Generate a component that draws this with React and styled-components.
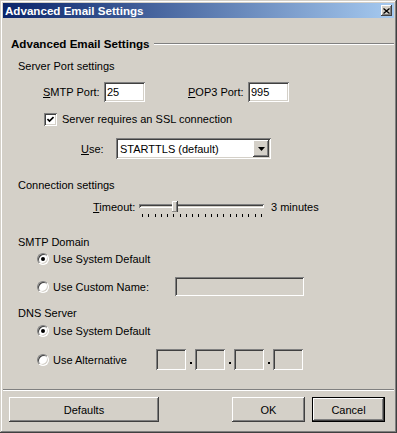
import React from 'react';
import styled, { createGlobalStyle } from 'styled-components';

const GlobalStyle = createGlobalStyle`
  html, body {
    margin: 0;
    padding: 0;
    background: #d4d0c8;
  }
  body {
    font-family: "Liberation Sans", Arial, sans-serif;
    font-size: 11px;
    color: #000;
  }
`;

const RAISED = 'inset -1px -1px #404040, inset 1px 1px #ffffff, inset -2px -2px #808080, inset 2px 2px #d4d0c8';
const SUNKEN = 'inset 1px 1px #808080, inset -1px -1px #ffffff, inset 2px 2px #404040, inset -2px -2px #d4d0c8';

const Window = styled.div`
  box-sizing: border-box;
  width: 397px;
  height: 433px;
  padding: 3px;
  background: #d4d0c8;
  box-shadow: inset -1px -1px #404040, inset 1px 1px #d4d0c8, inset -2px -2px #808080, inset 2px 2px #ffffff;
  display: flex;
  flex-direction: column;
`;

const TitleBar = styled.div`
  height: 15px;
  display: flex;
  align-items: center;
  padding-left: 2px;
  background: linear-gradient(to right, #0a246a, #a6caf0);
  color: #fff;
  font-weight: bold;
  font-size: 11.6px;
`;

const TitleText = styled.span`
  flex: 1;
`;

const CloseButton = styled.div`
  width: 11px;
  height: 11px;
  margin-right: 2px;
  background: #d4d0c8;
  box-shadow: inset -1px -1px #404040, inset 1px 1px #ffffff, inset -2px -2px #808080;
  display: flex;
  align-items: center;
  justify-content: center;
`;

const Row = styled.div`
  display: flex;
  align-items: ${p => (p.$top ? 'flex-start' : 'center')};
  height: ${p => p.$h || 14}px;
  margin-top: ${p => p.$mt || 0}px;
  padding-left: ${p => p.$indent || 0}px;
  line-height: 14px;
  white-space: nowrap;
`;

const GroupTitle = styled.span`
  font-weight: bold;
  font-size: 11.6px;
  padding-left: 8px;
`;

const GroupLine = styled.div`
  flex: 1;
  height: 0;
  margin-left: 4px;
  border-top: 1px solid #808080;
  border-bottom: 1px solid #ffffff;
`;

const Label = styled.span`
  display: inline-block;
  width: ${p => (p.$w ? `${p.$w}px` : 'auto')};
  margin-left: ${p => p.$ml || 0}px;
`;

const Key = styled.span`
  text-decoration: underline;
`;

const TextBox = styled.div`
  box-sizing: border-box;
  width: ${p => p.$w}px;
  height: ${p => p.$h || 20}px;
  padding: 0 3px;
  display: flex;
  align-items: center;
  background: ${p => (p.$disabled ? '#d4d0c8' : '#ffffff')};
  box-shadow: ${SUNKEN};
`;

const CheckBox = styled.div`
  box-sizing: border-box;
  width: 13px;
  height: 13px;
  margin-right: 5px;
  background: #fff;
  box-shadow: ${SUNKEN};
  display: flex;
  align-items: center;
  justify-content: center;
`;

const Radio = styled.div`
  box-sizing: border-box;
  width: 12px;
  height: 12px;
  margin-right: 4px;
  border-radius: 50%;
  border: 1px solid;
  border-color: #808080 #ffffff #ffffff #808080;
  background: #fff;
  box-shadow: inset 1px 1px #404040, inset -1px -1px #d4d0c8;
  display: flex;
  align-items: center;
  justify-content: center;

  &::after {
    content: '';
    display: ${p => (p.$checked ? 'block' : 'none')};
    width: 4px;
    height: 4px;
    border-radius: 50%;
    background: #000;
  }
`;

const Select = styled.div`
  box-sizing: border-box;
  width: 155px;
  height: 21px;
  padding: 2px 2px 2px 4px;
  display: flex;
  align-items: center;
  background: #fff;
  box-shadow: ${SUNKEN};
`;

const SelectValue = styled.span`
  flex: 1;
`;

const DropButton = styled.div`
  width: 16px;
  height: 17px;
  background: #d4d0c8;
  box-shadow: ${RAISED};
  display: flex;
  align-items: center;
  justify-content: center;
`;

const Slider = styled.div`
  position: relative;
  width: 125px;
  height: 18px;
`;

const Track = styled.div`
  margin-top: 4px;
  height: 4px;
  box-shadow: ${SUNKEN};
`;

const Ticks = styled.div`
  display: flex;
  justify-content: space-between;
  margin: 6px 2px 0 3px;
`;

const Tick = styled.div`
  width: 1px;
  height: 3px;
  background: #000;
`;

const Thumb = styled.svg`
  position: absolute;
  top: 1px;
  left: 33px;
`;

const Dot = styled.div`
  width: 9px;
  height: 21px;
  display: flex;
  align-items: flex-end;
  justify-content: center;

  &::after {
    content: '';
    width: 2px;
    height: 2px;
    margin-bottom: 6px;
    background: #000;
  }
`;

const Separator = styled.div`
  margin-top: 19px;
  border-top: 1px solid #808080;
  border-bottom: 1px solid #ffffff;
`;

const ButtonRow = styled.div`
  display: flex;
  margin-top: 6px;
  padding: 0 9px 0 6px;
`;

const Button = styled.div`
  box-sizing: border-box;
  width: ${p => p.$w}px;
  height: 25px;
  margin-left: ${p => (p.$push ? 'auto' : `${p.$ml || 0}px`)};
  display: flex;
  align-items: center;
  justify-content: center;
  background: #d4d0c8;
  box-shadow: ${p =>
    p.$default
      ? 'inset 0 0 0 1px #000, inset -2px -2px #404040, inset 2px 2px #ffffff, inset -3px -3px #808080'
      : RAISED};
`;

const ipParts = [0, 1, 2, 3];

export default function App() {
  return (
    <>
      <GlobalStyle />
      <Window>
        <TitleBar>
          <TitleText>Advanced Email Settings</TitleText>
          <CloseButton>
            <svg width="7" height="6" viewBox="0 0 7 6">
              <path d="M0.5 0.5 L6.5 5.5 M6.5 0.5 L0.5 5.5" stroke="#000" strokeWidth="1.3" />
            </svg>
          </CloseButton>
        </TitleBar>

        <Row $mt={19}>
          <GroupTitle>Advanced Email Settings</GroupTitle>
          <GroupLine />
        </Row>

        <Row $mt={8} $indent={15}>Server Port settings</Row>

        <Row $mt={9} $h={20} $indent={40}>
          <Label $w={61}><Key>S</Key>MTP Port:</Label>
          <TextBox $w={41}>25</TextBox>
          <Label $w={60} $ml={43}><Key>P</Key>OP3 Port:</Label>
          <TextBox $w={41}>995</TextBox>
        </Row>

        <Row $mt={10} $indent={41}>
          <CheckBox>
            <svg width="7" height="7" viewBox="0 0 7 7">
              <path d="M0.5 3 L2.5 5 L6.5 1" fill="none" stroke="#000" strokeWidth="1.6" />
            </svg>
          </CheckBox>
          Server requires an SSL connection
        </Row>

        <Row $mt={12} $h={21} $indent={78}>
          <Label $w={35}><Key>U</Key>se:</Label>
          <Select>
            <SelectValue>STARTTLS (default)</SelectValue>
            <DropButton>
              <svg width="7" height="4" viewBox="0 0 7 4">
                <path d="M0 0 H7 L3.5 4 Z" fill="#000" />
              </svg>
            </DropButton>
          </Select>
        </Row>

        <Row $mt={19} $indent={15}>Connection settings</Row>

        <Row $mt={8} $h={18} $indent={90} $top>
          <Label $w={46}><Key>T</Key>imeout:</Label>
          <Slider>
            <Track />
            <Ticks>
              {Array.from({ length: 20 }, (_, i) => <Tick key={i} />)}
            </Ticks>
            <Thumb width="6" height="11" viewBox="0 0 6 11">
              <path d="M0 0 H6 V11 H0 Z" fill="#d4d0c8" />
              <path d="M0.5 10.5 V0.5 H5" fill="none" stroke="#fff" />
              <path d="M5.5 0 V11 H0" fill="none" stroke="#404040" />
              <path d="M4.5 1 V10" fill="none" stroke="#808080" />
            </Thumb>
          </Slider>
          <Label $ml={7}>3 minutes</Label>
        </Row>

        <Row $mt={17} $indent={15}>SMTP Domain</Row>

        <Row $mt={3} $indent={34}>
          <Radio $checked />
          Use System Default
        </Row>

        <Row $mt={11} $h={19} $indent={34}>
          <Radio />
          <Label $w={122}>Use Custom Name:</Label>
          <TextBox $w={129} $h={19} $disabled />
        </Row>

        <Row $mt={10} $indent={15}>DNS Server</Row>

        <Row $mt={4} $indent={34}>
          <Radio $checked />
          Use System Default
        </Row>

        <Row $mt={11} $h={21} $indent={34}>
          <Radio />
          <Label $w={103}>Use Alternative</Label>
          {ipParts.map(i => (
            <React.Fragment key={i}>
              {i > 0 && <Dot />}
              <TextBox $w={30} $h={21} $disabled />
            </React.Fragment>
          ))}
        </Row>

        <Separator />

        <ButtonRow>
          <Button $w={150}>Defaults</Button>
          <Button $w={73} $push>OK</Button>
          <Button $w={73} $ml={7} $default>Cancel</Button>
        </ButtonRow>
      </Window>
    </>
  );
}
